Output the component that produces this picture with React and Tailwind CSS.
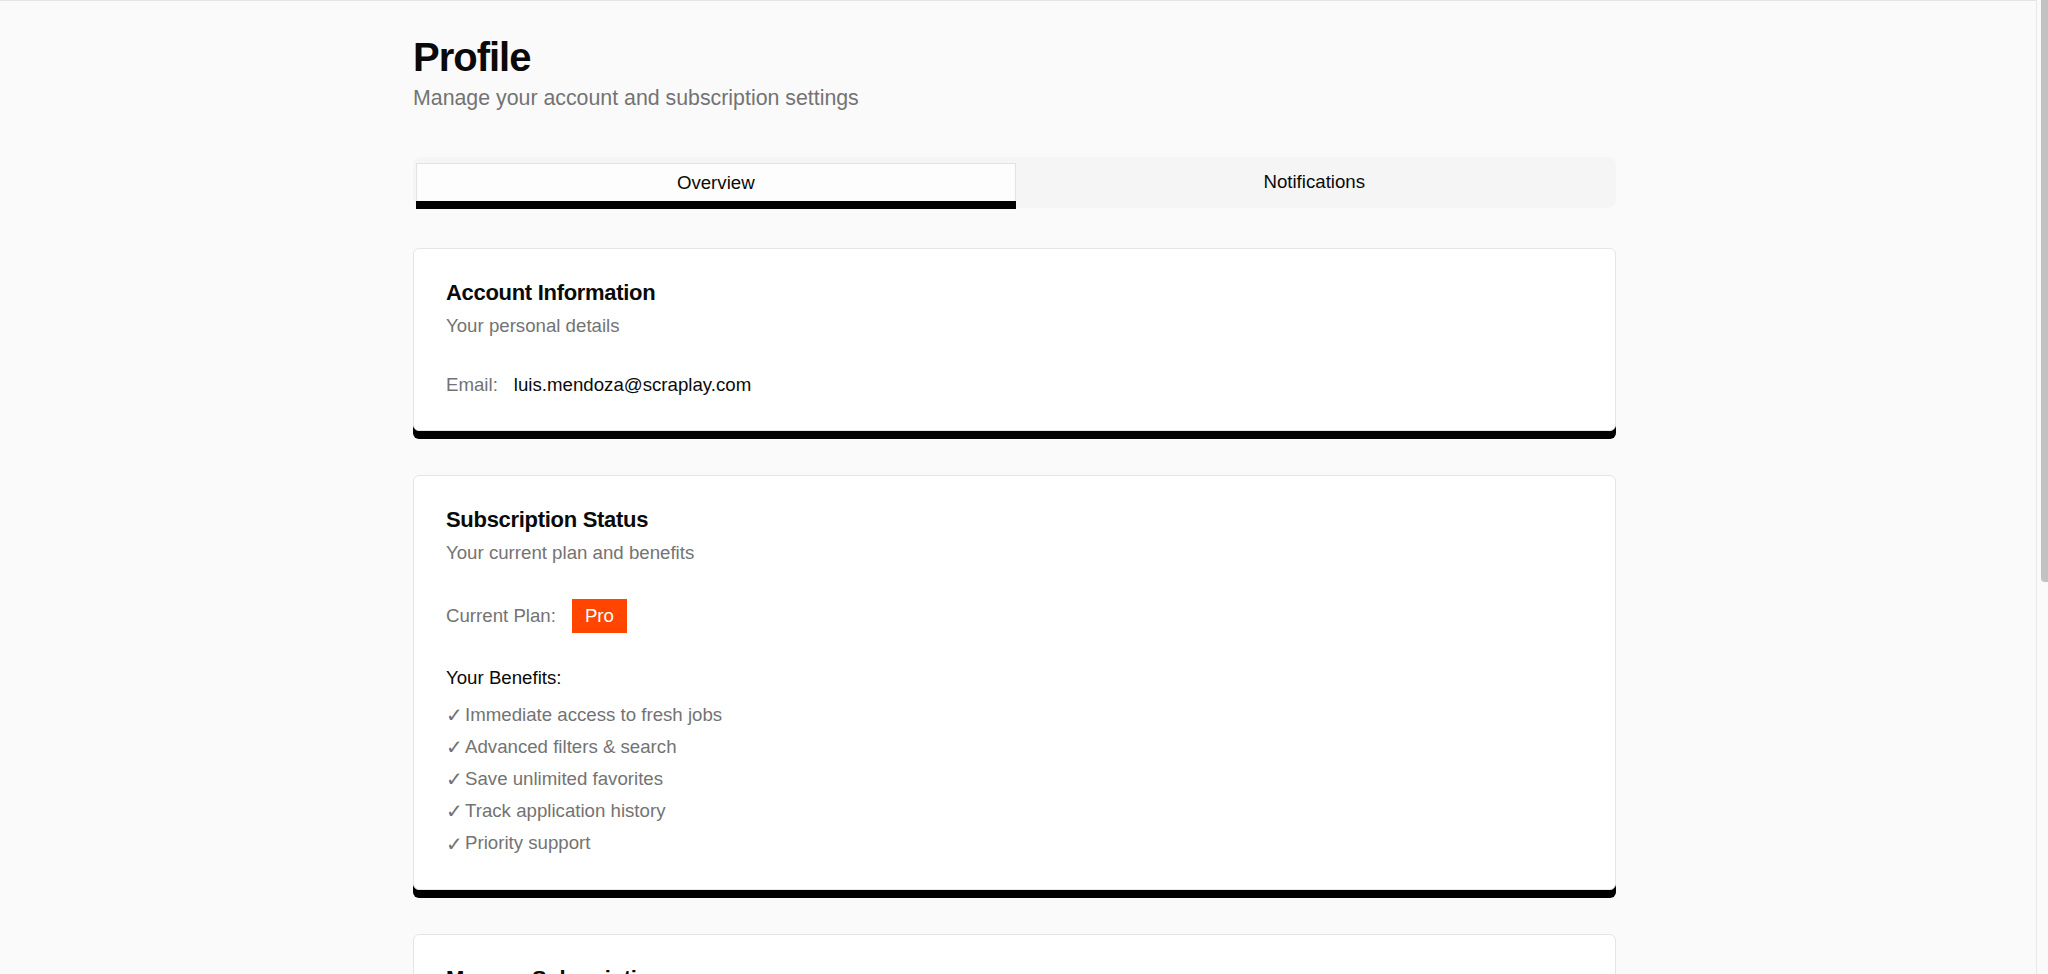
import React, { useState } from 'react'

const benefits = [
    "Immediate access to fresh jobs",
    "Advanced filters & search",
    "Save unlimited favorites",
    "Track application history",
    "Priority support",
]

function Card({ title, description, children }) {
    return (
        <div className="flex flex-col gap-8 rounded-[6px] border border-[#e5e5e5] bg-white px-8 py-8 shadow-[0_8px_0_0_#000]">
            <div className="flex flex-col gap-2">
                <h2 className="text-[22px] leading-[24px] font-bold tracking-[-0.3px] text-[#0a0a0a]">{title}</h2>
                <p className="text-[18.67px] leading-[26.67px] text-[#737373]">{description}</p>
            </div>
            {children}
        </div>
    )
}

function App() {
    const [tab, setTab] = useState("overview")

    return (
        <div className="flex h-screen w-full overflow-hidden bg-[#fafafa] font-['Liberation_Sans',Arial,sans-serif] text-[#0a0a0a]">
            <div className="flex-1 overflow-hidden border-t border-[#e5e5e5] pr-[7px]">
                <div className="mx-auto w-[1203px] pt-8">
                    <h1 className="text-[40px] leading-[48px] font-bold tracking-tight">Profile</h1>
                    <p className="mt-px text-[21.33px] leading-[32px] text-[#737373]">Manage your account and subscription settings</p>

                    <div className="mt-[43px] flex h-[51px] items-start rounded-[8px] bg-[#f5f5f5] px-[3px] pt-[6px]">
                        <button
                            onClick={() => setTab("overview")}
                            className={tab === "overview"
                                ? "flex h-[38px] flex-1 items-center justify-center border border-b-0 border-[#e3e3e3] bg-[#fdfdfd] text-[18.67px] shadow-[0_8px_0_0_#000]"
                                : "flex h-[38px] flex-1 items-center justify-center text-[18.67px]"}
                        >
                            Overview
                        </button>
                        <button
                            onClick={() => setTab("notifications")}
                            className={tab === "notifications"
                                ? "flex h-[38px] flex-1 items-center justify-center border border-b-0 border-[#e3e3e3] bg-[#fdfdfd] text-[18.67px] shadow-[0_8px_0_0_#000]"
                                : "flex h-[38px] flex-1 items-center justify-center text-[18.67px]"}
                        >
                            Notifications
                        </button>
                    </div>

                    <div className="mt-[40px] flex flex-col gap-[44px] pb-16">
                        <Card title="Account Information" description="Your personal details">
                            <div className="flex items-center gap-4 text-[18.67px] leading-[26.67px]">
                                <span className="text-[#737373]">Email:</span>
                                <span>luis.mendoza@scraplay.com</span>
                            </div>
                        </Card>

                        <Card title="Subscription Status" description="Your current plan and benefits">
                            <div className="flex flex-col">
                                <div className="flex items-center gap-4 text-[18.67px] leading-[26.67px]">
                                    <span className="text-[#737373]">Current Plan:</span>
                                    <span className="flex h-[34px] items-center bg-[#ff4500] px-[13px] text-white">Pro</span>
                                </div>
                                <p className="mt-8 text-[18.67px] leading-[26.67px]">Your Benefits:</p>
                                <ul className="mt-[10px] flex flex-col gap-[5.5px] text-[18.67px] text-[#737373]">
                                    {benefits.map((b, i) => (
                                        <li key={i} className="flex h-[26.67px] items-center leading-[26.67px]">
                                            <span className="w-[19px] text-[20px] leading-none">✓</span>
                                            <span>{b}</span>
                                        </li>
                                    ))}
                                </ul>
                            </div>
                        </Card>

                        <Card title="Manage Subscription" description="Change or cancel your current plan">
                            <div className="flex items-center gap-4 text-[18.67px] leading-[26.67px] text-[#737373]">
                                <span>Next billing date:</span>
                                <span className="text-[#0a0a0a]">—</span>
                            </div>
                        </Card>
                    </div>
                </div>
            </div>

            {/* fake scrollbar */}
            <div className="flex w-[12px] justify-end border-l border-[#e8e8e8] bg-[#fafafa]">
                <div className="h-[582px] w-[7px] rounded-bl-[4px] bg-[#c2c2c2]"></div>
            </div>
        </div>
    )
}

export default App
